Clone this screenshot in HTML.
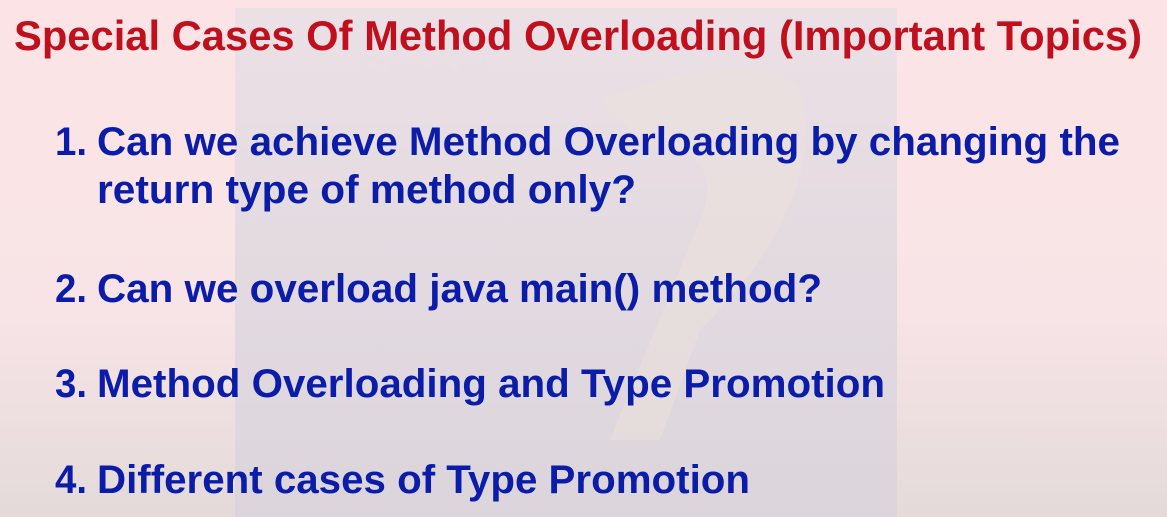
<!DOCTYPE html>
<html><head><meta charset="utf-8"><style>
html,body{margin:0;padding:0;width:1167px;height:517px;overflow:hidden}
body{background:linear-gradient(#fce4e6 0%,#f8e4e6 60%,#e4dada 100%)}
svg{position:absolute;left:0;top:0}
text{font-family:"Liberation Sans",Arial,sans-serif;font-weight:bold}
.b{fill:#0b1da8;font-size:40px}
</style></head><body>
<svg width="1167" height="517">
<defs><linearGradient id="w" x1="0" y1="0" x2="0" y2="1"><stop offset="0" stop-color="#ebe0e6"/><stop offset="1" stop-color="#dbd5db"/></linearGradient></defs>
<rect x="235" y="8" width="662" height="509" fill="url(#w)"/>
<path d="M600 100 Q760 40 800 90 Q830 200 700 330 L660 440 L610 440 L700 220 Q730 150 640 140 Z" fill="#eee2dc" opacity="0.45"/>
<text x="355" y="90" font-size="48" fill="#e8dee4">Smart</text>
<text x="14" y="50" font-size="42" fill="#c0101e" textLength="1128" lengthAdjust="spacingAndGlyphs">Special Cases Of Method Overloading (Important Topics)</text>
<text class="b" x="55" y="155" textLength="32" lengthAdjust="spacingAndGlyphs">1.</text>
<text class="b" x="97" y="155" textLength="1023" lengthAdjust="spacingAndGlyphs">Can we achieve Method Overloading by changing the</text>
<text class="b" x="97" y="203" textLength="539" lengthAdjust="spacingAndGlyphs">return type of method only?</text>
<text class="b" x="55" y="302" textLength="32" lengthAdjust="spacingAndGlyphs">2.</text>
<text class="b" x="97" y="302" textLength="725" lengthAdjust="spacingAndGlyphs">Can we overload java main() method?</text>
<text class="b" x="55" y="397" textLength="32" lengthAdjust="spacingAndGlyphs">3.</text>
<text class="b" x="97" y="397" textLength="788" lengthAdjust="spacingAndGlyphs">Method Overloading and Type Promotion</text>
<text class="b" x="55" y="493" textLength="32" lengthAdjust="spacingAndGlyphs">4.</text>
<text class="b" x="97" y="493" textLength="653" lengthAdjust="spacingAndGlyphs">Different cases of Type Promotion</text>
</svg>
</body></html>
